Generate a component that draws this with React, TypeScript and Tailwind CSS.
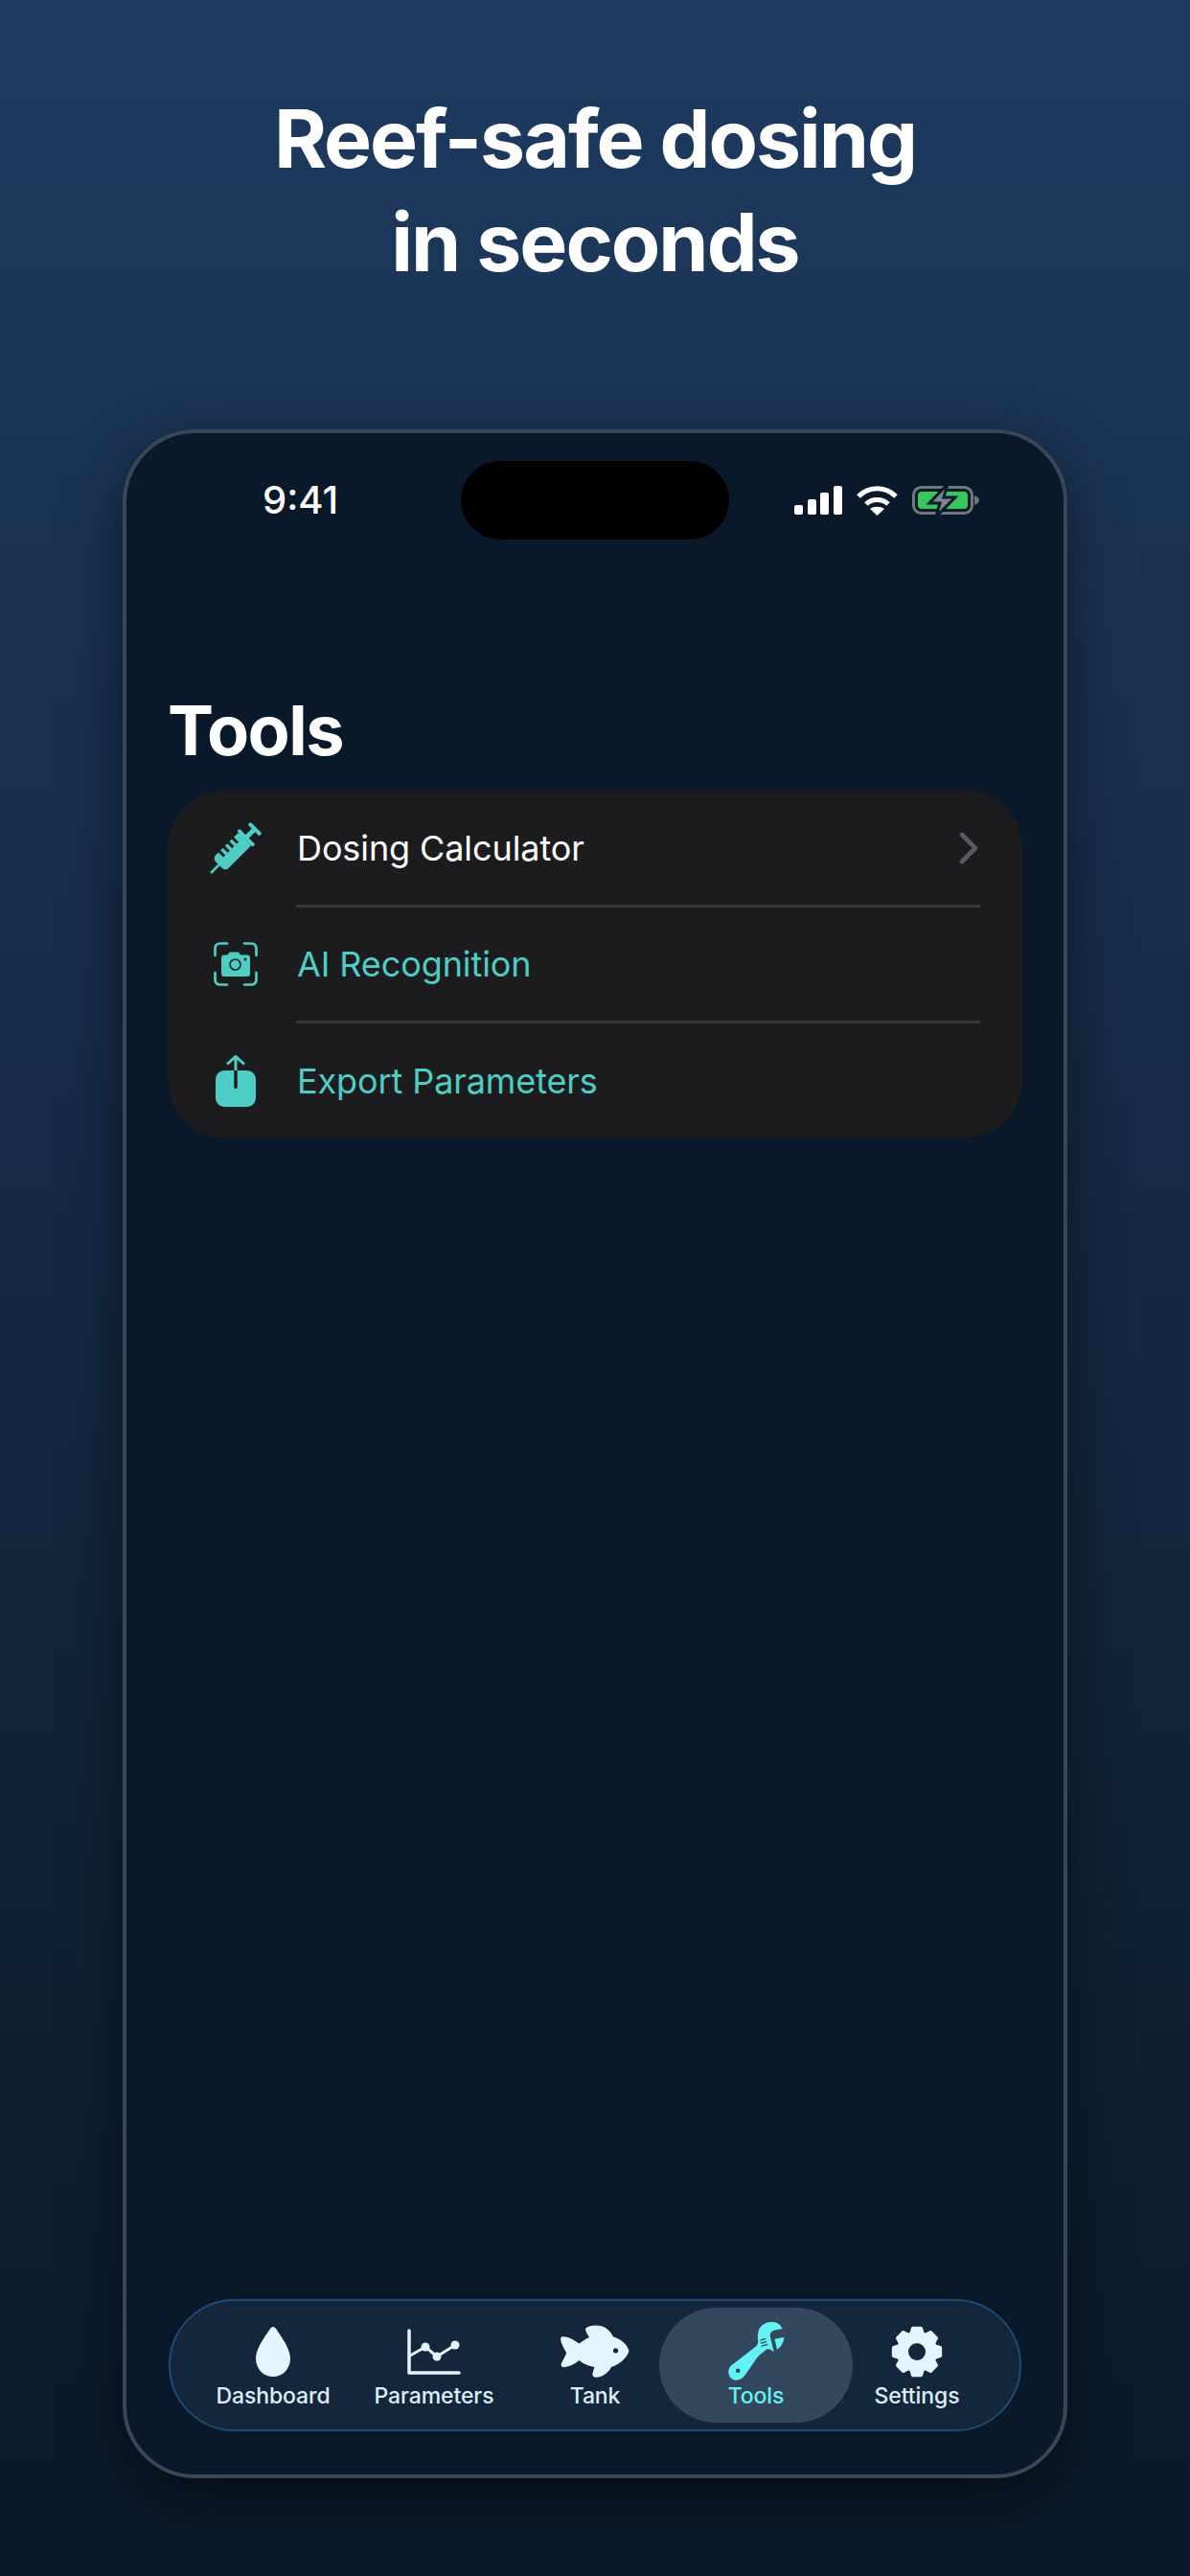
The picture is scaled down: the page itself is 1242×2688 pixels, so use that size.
import { ChevronRight } from 'lucide-react';

const tabs = [
  { label: 'Dashboard', icon: <DropIcon /> },
  { label: 'Parameters', icon: <ChartIcon /> },
  { label: 'Tank', icon: <FishIcon /> },
  { label: 'Tools', icon: <WrenchIcon />, active: true },
  { label: 'Settings', icon: <GearIcon /> },
];

function DropIcon() {
  return (
    <svg width="36" height="52" viewBox="0 0 36 52" fill="#e3f6ff">
      <path d="M18 0C20 0 21 2 22 3.500C27 11 36 23 36 33C36 44 28 52 18 52C8 52 0 44 0 33C0 23 9 11 14 3.500C15 2 16 0 18 0Z" />
    </svg>
  );
}

function ChartIcon() {
  return (
    <svg width="56" height="48" viewBox="0 0 56 48" fill="none" stroke="#e3f6ff" strokeLinecap="round" strokeLinejoin="round">
      <path d="M2 2V46H54" strokeWidth="3.500" />
      <path d="M3 28L19 19L31 29L50 17" strokeWidth="3" />
      <circle cx="19" cy="19" r="4.500" fill="#e3f6ff" stroke="none" />
      <circle cx="31" cy="29" r="4.500" fill="#e3f6ff" stroke="none" />
      <circle cx="50" cy="17" r="4.500" fill="#e3f6ff" stroke="none" />
    </svg>
  );
}

function FishIcon() {
  return (
    <svg width="72" height="55" viewBox="40 33 216 166" fill="#e3f6ff">
      <path
        fillRule="evenodd"
        d="M45 70C60 68 80 78 98 92C108 84 118 77 130 72C122 60 115 50 120 43C130 33 165 30 185 45C195 52 202 62 205 70C232 78 250 95 255 115C250 135 225 158 200 165C190 185 170 198 150 198C140 198 138 190 142 180L146 166C125 162 110 155 98 145C85 155 65 168 48 166C40 165 40 158 44 150C50 140 55 130 58 120C52 110 40 90 40 78C40 73 42 71 45 70ZM213 106A8 8 0 1 0 213 122A8 8 0 1 0 213 106Z"
      />
    </svg>
  );
}

function WrenchIcon() {
  return (
    <svg width="59" height="61" viewBox="22 14 177 185" fill="#64f3f5">
      <path
        fillRule="evenodd"
        d="M118 38C125 22 145 12 165 14C178 15 188 25 193 35L168 40C158 42 152 50 154 60L166 108C155 100 147 96 138 104C128 112 118 118 112 128L76 180C68 192 58 198 46 198C32 198 22 186 22 172C22 160 28 152 38 146L95 102C112 90 118 85 115 68C114 58 115 48 118 38ZM52 161A7 7 0 1 0 52 175A7 7 0 1 0 52 161Z"
      />
      <path d="M168 68L198 62C197 78 190 92 176 101Z" />
      <path d="M122 72L140 67M124 81L143 76M126 90L146 85" fill="none" stroke="#33475f" strokeWidth="4" />
    </svg>
  );
}

const gearPoints = Array.from({ length: 8 }, (_, i) => {
  const mid = (i * Math.PI) / 4 - Math.PI / 2;
  return [
    [mid - 0.3, 19.5],
    [mid - 0.17, 24.5],
    [mid + 0.17, 24.5],
    [mid + 0.3, 19.5],
  ]
    .map(([a, r]) => `${(27 + r * Math.cos(a)).toFixed(2)},${(27 + r * Math.sin(a)).toFixed(2)}`)
    .join(' ');
}).join(' ');

function GearIcon() {
  return (
    <svg width="54" height="54" viewBox="0 0 54 54" fill="#e3f6ff">
      <polygon points={gearPoints} stroke="#e3f6ff" strokeWidth="4" strokeLinejoin="round" />
      <circle cx="27" cy="27" r="9" fill="#14263b" />
    </svg>
  );
}

function SyringeIcon() {
  return (
    <svg width="56" height="54" viewBox="0 0 56 54" fill="#4ecdc4">
      <g transform="translate(1 53) rotate(-45)">
        <rect x="0" y="-1.250" width="15" height="2.500" />
        <rect x="12" y="-9.500" width="40" height="19" rx="4.500" />
        <rect x="50" y="-11.500" width="4" height="23" rx="1.500" />
        <rect x="53" y="-2.500" width="11" height="5" />
        <rect x="63" y="-8.500" width="4" height="17" rx="1.500" />
        <rect x="21" y="-10" width="3" height="7.500" fill="#1c1c1e" />
        <rect x="27.500" y="-10" width="3" height="7.500" fill="#1c1c1e" />
        <rect x="34" y="-10" width="3" height="7.500" fill="#1c1c1e" />
        <rect x="40.500" y="-10" width="3" height="7.500" fill="#1c1c1e" />
      </g>
    </svg>
  );
}

function CameraScanIcon() {
  return (
    <svg width="46" height="46" viewBox="0 0 46 46" fill="none" stroke="#4ecdc4" strokeWidth="2.700" strokeLinecap="round">
      <path d="M14 1.500H7C3.500 1.500 1.500 3.500 1.500 7V14M32 1.500H39C42.500 1.500 44.500 3.500 44.500 7V14M1.500 32V39C1.500 42.500 3.500 44.500 7 44.500H14M44.500 32V39C44.500 42.500 42.500 44.500 39 44.500H32" />
      <path
        fillRule="evenodd"
        stroke="none"
        fill="#4ecdc4"
        d="M11 13.500H14.500L16.500 10.500H26L28 13.500H35C37 13.500 38 14.500 38 16.500V33C38 35 37 36 35 36H11C9 36 8 35 8 33V16.500C8 14.500 9 13.500 11 13.500Z"
      />
      <circle cx="22.500" cy="23.500" r="5.500" stroke="#1c1c1e" strokeWidth="1.600" />
      <circle cx="33" cy="18" r="1.500" fill="#1c1c1e" stroke="none" />
    </svg>
  );
}

function ShareIcon() {
  return (
    <svg width="42" height="54" viewBox="0 0 42 54" fill="#4ecdc4">
      <path d="M10 16H32C38 16 42 20 42 26V44C42 50 38 54 32 54H10C4 54 0 50 0 44V26C0 20 4 16 10 16Z" />
      <rect x="19.300" y="14" width="3.400" height="21" rx="1.700" fill="#1c1c1e" />
      <path d="M12 9.500L21 1.500L30 9.500M21 2V16" fill="none" stroke="#4ecdc4" strokeWidth="3" />
    </svg>
  );
}

export default function App() {
  return (
    <div className="flex h-[2688px] w-[1242px] flex-col items-center overflow-hidden bg-gradient-to-b from-[#1e3a5f] to-[#0a1929] font-['Inter',sans-serif]">
      <h1 className="mt-[91px] text-center text-[84px] font-bold leading-[108px] tracking-[-2px] text-white">
        Reef-safe dosing
        <br />
        in seconds
      </h1>

      {/* Phone frame */}
      <div className="mt-[141px] flex h-[2138px] w-[986px] flex-col rounded-[76px] border-[4px] border-[#3a4656] bg-[#0a1929] px-[43px] shadow-[0_20px_60px_rgba(0,0,0,0.5)]">
        {/* Status bar */}
        <div className="mt-[29px] flex h-[82px] items-center justify-between">
          <span className="ml-[99px] text-[40px] font-medium text-white">9:41</span>
          <div className="absolute left-[481px] h-[82px] w-[280px] rounded-[41px] bg-black" />
          <div className="mr-[45px] flex items-center gap-[15px]">
            <svg width="50" height="30" viewBox="0 0 50 30" fill="#fff">
              <rect x="0" y="20" width="9" height="10" rx="2" />
              <rect x="14" y="14" width="9" height="16" rx="2" />
              <rect x="27" y="7" width="9" height="23" rx="2" />
              <rect x="41" y="0" width="9" height="30" rx="2" />
            </svg>
            <svg width="43" height="31" viewBox="0 0 43 31" fill="none" stroke="#fff" strokeWidth="5">
              <path d="M2 11C13 0 30 0 41 11" />
              <path d="M10 19C16 13 27 13 33 19" />
              <path d="M21.500 31L14 24C18 21 25 21 29 24Z" fill="#fff" stroke="none" />
            </svg>
            <svg width="70" height="34" viewBox="0 0 70 34" fill="none">
              <rect x="1.500" y="3.500" width="61" height="27" rx="8" stroke="#6e7680" strokeWidth="3" />
              <rect x="6" y="8" width="52" height="18" rx="4" fill="#34c759" />
              <path d="M65 12C68 13 70 15 70 17C70 19 68 21 65 22Z" fill="#6e7680" />
              <path d="M37 0L18 20H29L25 34L45 14H33Z" fill="#7d848d" stroke="#0a1929" strokeWidth="3" />
            </svg>
          </div>
        </div>

        <h2 className="mt-[155px] text-[72px] font-bold leading-[88px] tracking-[-1.5px] text-white">Tools</h2>

        {/* Menu card */}
        <div className="mt-[19px] rounded-[60px] bg-[#1c1c1e]">
          <div className="flex h-[119px] items-center pl-[44px] pr-[44px]">
            <div className="flex w-[91px] items-center"><SyringeIcon /></div>
            <span className="flex-1 text-[36px] tracking-[-0.1px] text-white">Dosing Calculator</span>
            <ChevronRight className="-mr-[16px] h-[56px] w-[56px] text-[#5a5a5e]" strokeWidth={2} />
          </div>
          <div className="ml-[134px] mr-[44px] h-[3px] bg-[#38383a]" />
          <div className="flex h-[118px] items-center pl-[48px]">
            <div className="flex w-[87px] items-center"><CameraScanIcon /></div>
            <span className="text-[36px] tracking-[-0.1px] text-[#4ecdc4]">AI Recognition</span>
          </div>
          <div className="ml-[134px] mr-[44px] h-[3px] bg-[#38383a]" />
          <div className="flex h-[119px] items-center pl-[50px]">
            <div className="flex w-[85px] items-center"><ShareIcon /></div>
            <span className="text-[36px] tracking-[-0.1px] text-[#4ecdc4]">Export Parameters</span>
          </div>
        </div>

        {/* Tab bar */}
        <div className="mx-[1px] mt-auto mb-[45px] grid h-[138px] grid-cols-5 rounded-[69px] border-[2px] border-[#1e4a78] bg-[#14263b] px-[23px]">
          {tabs.map((tab) => (
            <div
              key={tab.label}
              className={`flex flex-col items-center justify-center ${
                tab.active ? '-mx-[17px] my-[7px] rounded-[60px] bg-[#33475f]' : ''
              }`}
            >
              <div className="flex h-[62px] items-center justify-center">{tab.icon}</div>
              <span className={`mt-[1px] text-[23px] font-medium leading-[28px] tracking-[-0.1px] ${tab.active ? 'text-[#64f3f5]' : 'text-[#dceefa]'}`}>
                {tab.label}
              </span>
            </div>
          ))}
        </div>
      </div>
    </div>
  );
}
